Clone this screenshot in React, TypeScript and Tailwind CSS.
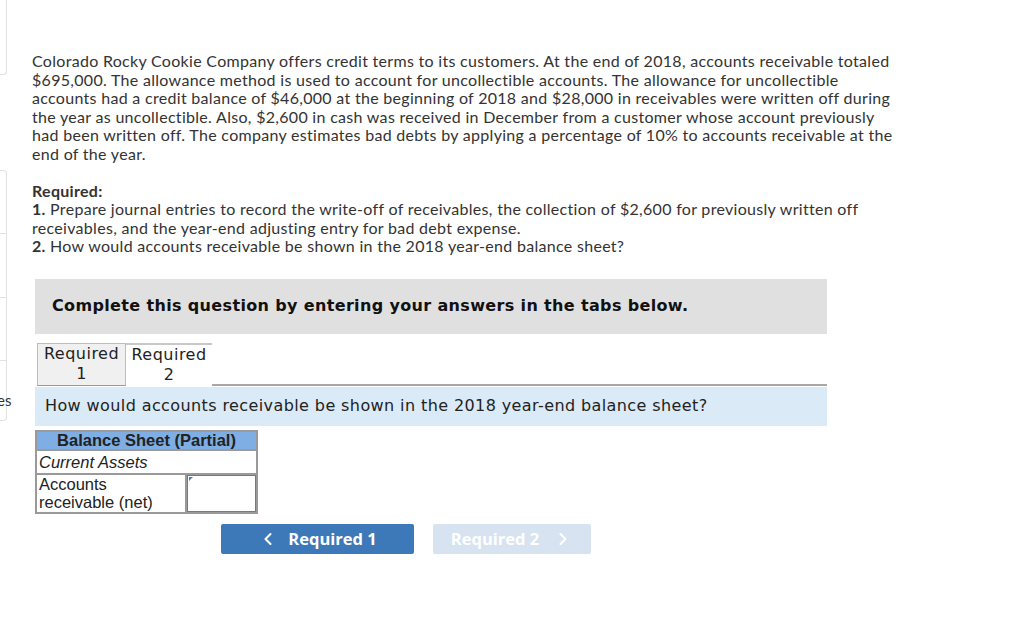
import { ChevronLeft, ChevronRight } from "lucide-react";

const body = "font-['Lato','Open_Sans',sans-serif]";
const btn = "font-['Open_Sans','Lato',sans-serif]";
const verdana = "font-['DejaVu_Sans','Verdana',sans-serif]";
const arial = "font-['Liberation_Sans','Arial',sans-serif]";

function SideRail() {
  return (
    <div className="w-[32px] shrink-0 text-[#333]">
      <div className="h-[75px] w-[7px] rounded-br-[4px] border-r border-b border-[#e2e2e2]" />
      <div className="mt-[95px] w-[7px] rounded-r-[4px] border border-l-0 border-[#e2e2e2]">
        <div className="h-[63px] border-b border-[#e2e2e2]" />
        <div className="h-[64px] border-b border-[#e2e2e2]" />
        <div className="h-[63px] border-b border-[#e2e2e2]" />
        <div className="h-[59px]" />
      </div>
      <div className={`-mt-[28px] text-[15px] leading-none ${body} -ml-[3px]`}>es</div>
    </div>
  );
}

export default function App() {
  return (
    <div className="flex h-[641px] w-[1024px] overflow-hidden bg-white">
      <SideRail />
      <div className="pt-[52px] text-[#333]">
        <p className={`${body} text-[16px] leading-[18.6px] tracking-[0.3px]`}>
          Colorado Rocky Cookie Company offers credit terms to its customers. At the end of 2018, accounts receivable totaled
          <br />
          $695,000. The allowance method is used to account for uncollectible accounts. The allowance for uncollectible
          <br />
          accounts had a credit balance of $46,000 at the beginning of 2018 and $28,000 in receivables were written off during
          <br />
          the year as uncollectible. Also, $2,600 in cash was received in December from a customer whose account previously
          <br />
          had been written off. The company estimates bad debts by applying a percentage of 10% to accounts receivable at the
          <br />
          end of the year.
        </p>

        <div className={`${body} mt-[18px] text-[16px] leading-[18.6px] tracking-[0.3px]`}>
          <p className="font-bold">Required:</p>
          <p>
            <span className="font-bold">1.</span> Prepare journal entries to record the write-off of receivables, the collection of $2,600 for previously written off
            <br />
            receivables, and the year-end adjusting entry for bad debt expense.
          </p>
          <p>
            <span className="font-bold">2.</span> How would accounts receivable be shown in the 2018 year-end balance sheet?
          </p>
        </div>

        <div className="ml-[3px] mt-[23px] w-[792px]">
          <div className={`${verdana} flex h-[55px] items-center bg-[#e0e0e0] pl-[17px] text-[16px] font-bold tracking-[0.35px] text-[#111]`}>
            Complete this question by entering your answers in the tabs below.
          </div>

          <div className={`${verdana} mt-[9px] flex items-end text-[16px] leading-[20px] tracking-[0.5px] text-[#222]`}>
            <div className="ml-[2px] flex h-[43px] w-[89px] flex-col items-center justify-center border border-[#bdbdbd] border-b-[#999] bg-[#f0f0f0]">
              <span>Required</span>
              <span>1</span>
            </div>
            <div className="flex h-[43px] w-[86px] flex-col items-center justify-center border-t-2 border-[#c8c8c8] bg-white">
              <span>Required</span>
              <span>2</span>
            </div>
            <div className="flex-1 border-b-2 border-[#a8a8a8]" />
          </div>

          <div className={`${verdana} mt-[1px] flex h-[39px] items-center bg-[#daeaf7] pl-[10px] text-[16px] tracking-[0.4px] text-[#222]`}>
            How would accounts receivable be shown in the 2018 year-end balance sheet?
          </div>

          <table className={`${arial} mt-[4px] w-[223px] border-collapse text-[16.5px] text-[#222]`}>
            <tbody>
              <tr>
                <td colSpan={2} className="h-[19px] border-2 border-[#9a9a9a] bg-[#7eaee3] p-0 text-center font-bold leading-[17px]">
                  Balance Sheet (Partial)
                </td>
              </tr>
              <tr>
                <td colSpan={2} className="h-[24px] border-2 border-[#9a9a9a] px-[2px] py-0 italic leading-[18px]">
                  Current Assets
                </td>
              </tr>
              <tr>
                <td className="h-[39px] w-[150px] border-2 border-[#9a9a9a] px-[2px] py-0 leading-[18px]">
                  Accounts
                  <br />
                  receivable (net)
                </td>
                <td className="relative border-2 border-[#9a9a9a] p-0">
                  <div className="h-[37px] w-full border-[1.5px] border-[#4f80c4] bg-white" />
                  <div className="absolute left-[2px] top-[2px] h-0 w-0 border-t-[4px] border-r-[4px] border-t-[#4f80c4] border-r-transparent" />
                </td>
              </tr>
            </tbody>
          </table>

          <div className={`${btn} ml-[186px] mt-[10px] flex gap-[19px] text-[16.5px] font-bold`}>
            <button className="flex h-[30px] w-[193px] items-center justify-center gap-[10px] rounded-[2px] bg-[#3d78b8] text-white">
              <ChevronLeft size={20} strokeWidth={2.5} />
              <span>Required 1</span>
            </button>
            <button className="flex h-[30px] w-[158px] items-center justify-center gap-[14px] rounded-[2px] bg-[#d7e3f1] text-white">
              <span>Required 2</span>
              <ChevronRight size={20} strokeWidth={2.5} />
            </button>
          </div>
        </div>
      </div>
    </div>
  );
}
